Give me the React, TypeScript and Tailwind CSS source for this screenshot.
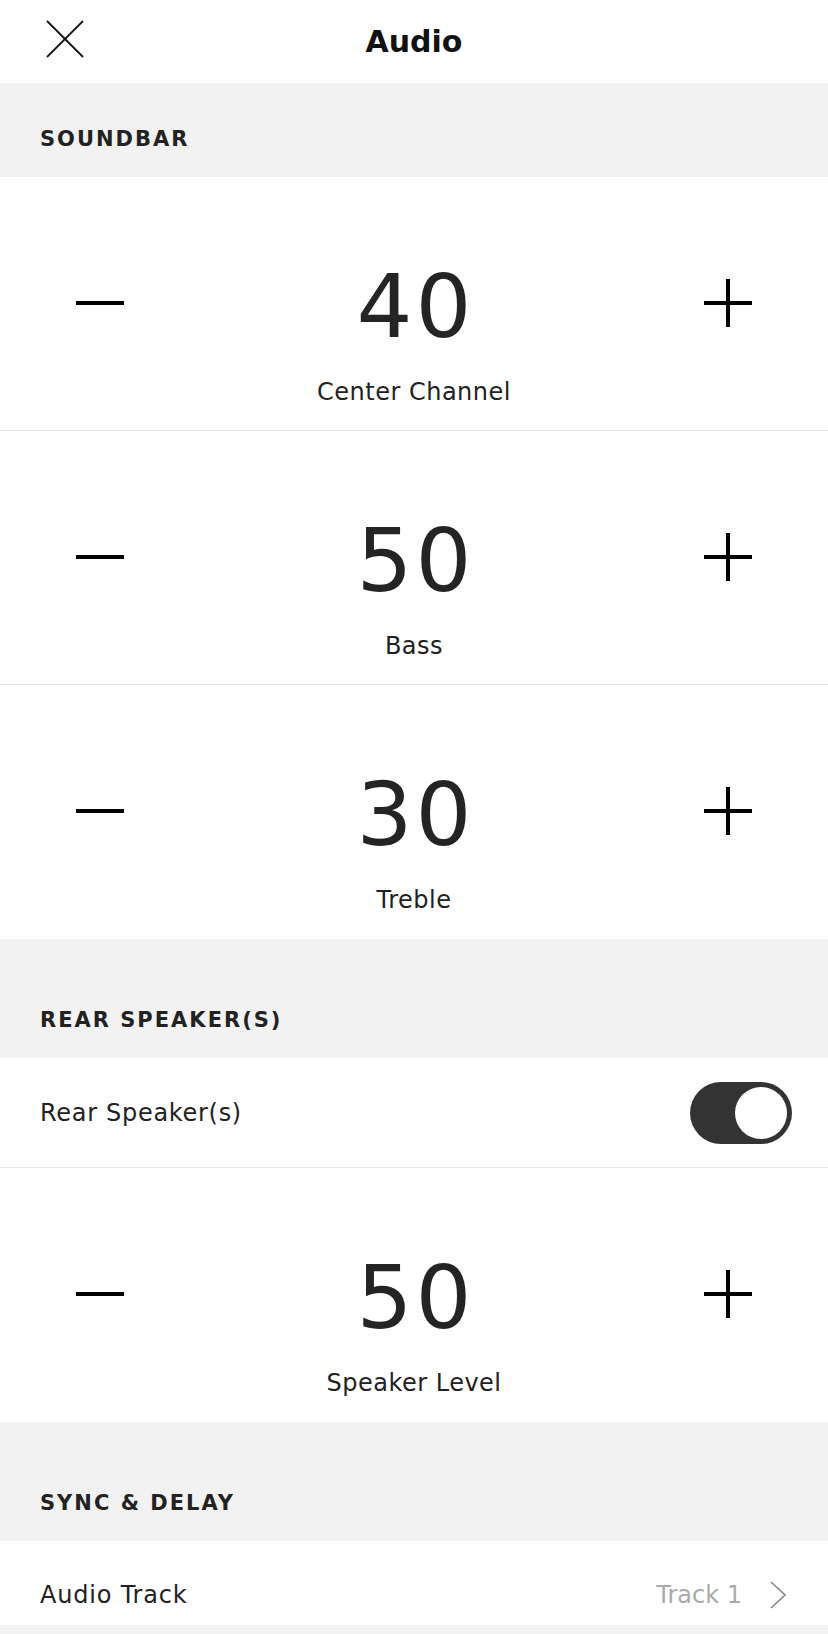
import { useState } from "react";

const font = { fontFamily: '"DejaVu Sans", "Liberation Sans", sans-serif' };

function MinusIcon() {
  return (
    <svg width="48" height="48" viewBox="0 0 48 48" className="mt-[16px] shrink-0">
      <rect x="0" y="22" width="48" height="4" fill="#000" />
    </svg>
  );
}

function PlusIcon() {
  return (
    <svg width="48" height="48" viewBox="0 0 48 48" className="mt-[16px] shrink-0">
      <rect x="0" y="22" width="48" height="4" fill="#000" />
      <rect x="22" y="0" width="4" height="48" fill="#000" />
    </svg>
  );
}

function Stepper({ value, label, last }: { value: number; label: string; last?: boolean }) {
  return (
    <div className={`bg-white pt-[86px] ${last ? "h-[254px]" : "h-[254px] border-b border-[#e6e6e6]"}`}>
      <div className="flex items-start justify-between pl-[76px] pr-[76px]">
        <MinusIcon />
        <span className="pl-[3px] text-[88px] leading-none tracking-[3px] text-[#242424]">{value}</span>
        <PlusIcon />
      </div>
      <div className="mt-[29px] text-center text-[24px] leading-none tracking-[0.5px] text-[#222]">{label}</div>
    </div>
  );
}

function SectionHeader({ title, tall }: { title: string; tall?: boolean }) {
  return (
    <div className={`flex items-end bg-[#f2f2f2] px-[40px] pb-[27px] ${tall ? "h-[119px]" : "h-[94px]"}`}>
      <span className="text-[21px] font-bold leading-none tracking-[2px] text-[#222]">{title}</span>
    </div>
  );
}

function Toggle({ on, onChange }: { on: boolean; onChange: () => void }) {
  return (
    <button
      onClick={onChange}
      className={`flex h-[62px] w-[102px] items-center rounded-full px-[5px] ${on ? "justify-end bg-[#333]" : "justify-start bg-[#ccc]"}`}
    >
      <span className="h-[52px] w-[52px] rounded-full bg-white" />
    </button>
  );
}

export default function App() {
  const [rear, setRear] = useState(true);

  return (
    <div className="min-h-[1634px] w-[828px] bg-[#f2f2f2]" style={font}>
      {/* Top bar */}
      <div className="relative flex h-[83px] items-center justify-center bg-white">
        <svg width="38" height="38" viewBox="0 0 38 38" className="absolute left-[46px] top-[20px]">
          <line x1="1" y1="1" x2="37" y2="37" stroke="#111" strokeWidth="1.8" />
          <line x1="37" y1="1" x2="1" y2="37" stroke="#111" strokeWidth="1.8" />
        </svg>
        <h1 className="text-[30px] font-bold leading-none text-[#111]">Audio</h1>
      </div>

      <SectionHeader title="SOUNDBAR" />
      <Stepper value={40} label="Center Channel" />
      <Stepper value={50} label="Bass" />
      <Stepper value={30} label="Treble" last />

      <SectionHeader title="REAR SPEAKER(S)" tall />
      <div className="flex h-[110px] items-center justify-between border-b border-[#e6e6e6] bg-white pl-[40px] pr-[36px]">
        <span className="text-[24px] leading-none tracking-[0.7px] text-[#222]">Rear Speaker(s)</span>
        <Toggle on={rear} onChange={() => setRear(!rear)} />
      </div>
      <Stepper value={50} label="Speaker Level" last />

      <SectionHeader title="SYNC & DELAY" tall />
      <div className="flex h-[84px] items-center justify-between bg-white pl-[40px] pr-[42px] pt-[24px]">
        <span className="text-[24px] leading-none tracking-[0.8px] text-[#222]">Audio Track</span>
        <div className="flex items-center gap-[28px]">
          <span className="text-[24px] leading-none text-[#aaa]">Track 1</span>
          <svg width="16" height="28" viewBox="0 0 16 28">
            <polyline points="1,1 15,14 1,27" fill="none" stroke="#888" strokeWidth="1.6" />
          </svg>
        </div>
      </div>
    </div>
  );
}
